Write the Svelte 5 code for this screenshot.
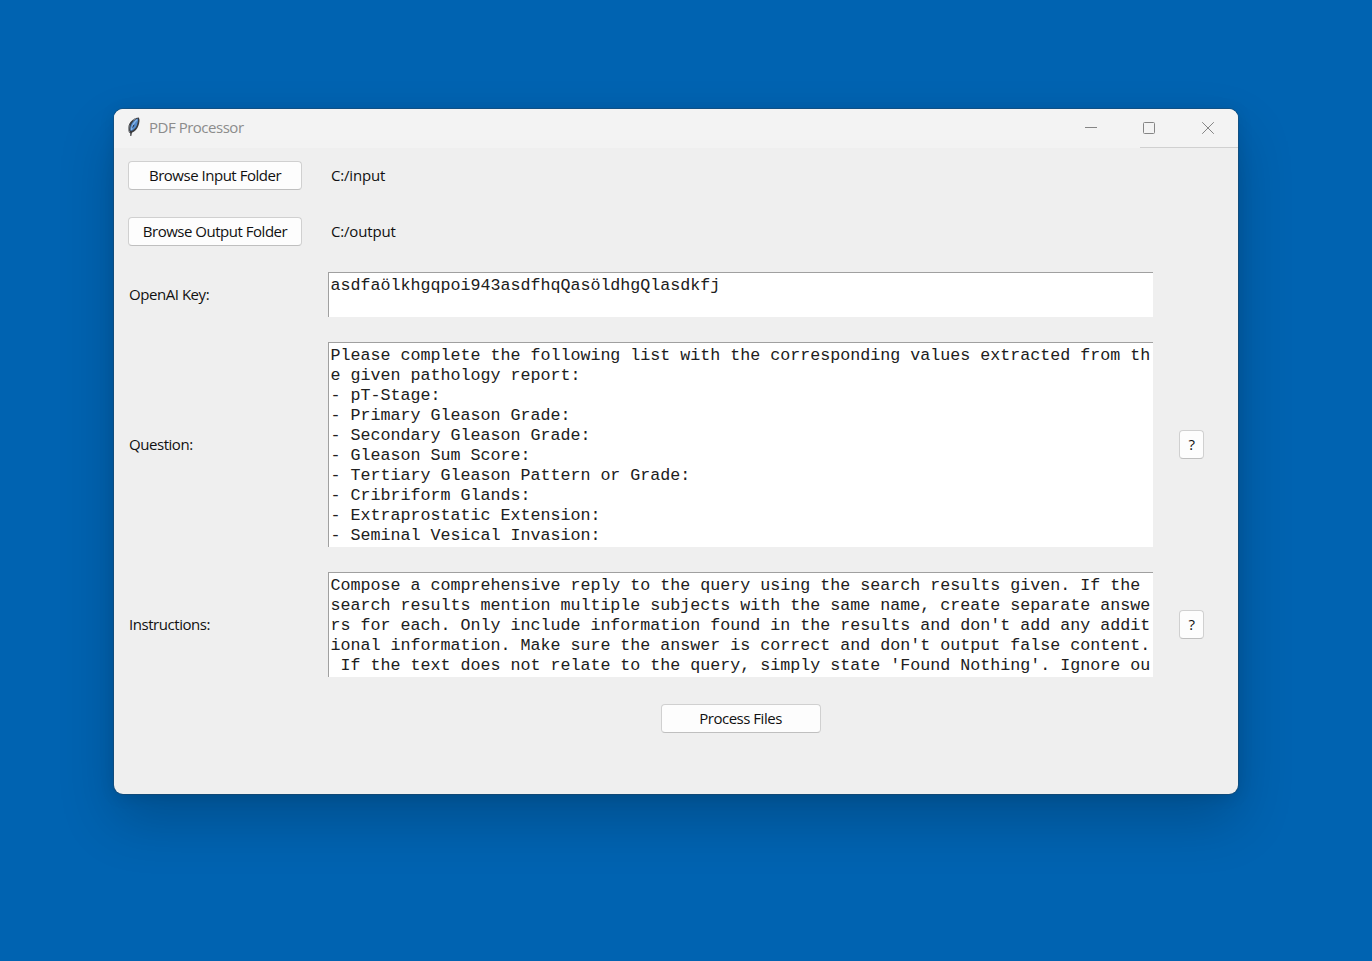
<script>
  const key = 'asdfaölkhgqpoi943asdfhqQasöldhgQlasdkfj';
  const question = [
    'Please complete the following list with the corresponding values extracted from th',
    'e given pathology report:',
    '- pT-Stage:',
    '- Primary Gleason Grade:',
    '- Secondary Gleason Grade:',
    '- Gleason Sum Score:',
    '- Tertiary Gleason Pattern or Grade:',
    '- Cribriform Glands:',
    '- Extraprostatic Extension:',
    '- Seminal Vesical Invasion:'
  ].join('\n');
  const instructions = [
    'Compose a comprehensive reply to the query using the search results given. If the ',
    'search results mention multiple subjects with the same name, create separate answe',
    "rs for each. Only include information found in the results and don't add any addit",
    "ional information. Make sure the answer is correct and don't output false content.",
    " If the text does not relate to the query, simply state 'Found Nothing'. Ignore ou"
  ].join('\n');
</script>

<main class="desktop">
  <section class="window">
    <header class="titlebar">
      <svg class="feather" width="14" height="20" viewBox="0 0 14 20">
        <path d="M11.800.4C8.200.5 4.400 3 2.500 6.500 1 9.300 1 12.500 1.900 15.200l1.300 1 .1 2.900h1l.6-3.400c3.200-1.200 5.400-3.800 6.500-6.900 1-2.700 1.700-6.600.4-8.400z" fill="#3a3c40" />
        <path d="M10.900 1.600C7.900 2.300 5.200 5.100 3.900 8.300c-.9 2.200-.8 4.400-.2 5.800 3-1 5.200-3.300 6.200-5.900.8-2.200 1.500-5 1-6.600z" fill="#5089cc" />
        <path d="M9.900 2.800C7.200 5.200 5.200 8.800 4.400 13" fill="none" stroke="#8ab6e6" stroke-width="1.300" />
        <path d="M2.100 8.200l-.5 5 1 2M9.200 1.300L6 3.200" fill="none" stroke="#9a9da0" stroke-width=".9" />
        <path d="M5.600 10.500l1.500-2.700" fill="none" stroke="#232b38" stroke-width="1" />
      </svg>
      <span class="title">PDF Processor</span>
      <div class="controls">
        <svg width="14" height="14" viewBox="0 0 14 14"><path d="M1 6.500h12" /></svg>
        <svg width="14" height="14" viewBox="0 0 14 14"><rect x="1.500" y="1.500" width="11" height="11" rx="1" /></svg>
        <svg width="14" height="14" viewBox="0 0 14 14"><path d="M1.200 1.200l11.600 11.600M12.800 1.200L1.200 12.800" /></svg>
      </div>
    </header>
    <div class="form">
      <div class="row input">
        <button>Browse Input Folder</button>
        <span class="path">C:/input</span>
      </div>
      <div class="row output">
        <button>Browse Output Folder</button>
        <span class="path">C:/output</span>
      </div>
      <div class="row key">
        <span class="label">OpenAI Key:</span>
        <div class="text">{key}</div>
      </div>
      <div class="row question">
        <span class="label">Question:</span>
        <div class="text">{question}</div>
        <button class="help">?</button>
      </div>
      <div class="row instructions">
        <span class="label">Instructions:</span>
        <div class="text">{instructions}</div>
        <button class="help">?</button>
      </div>
      <div class="row actions">
        <button class="process">Process Files</button>
      </div>
    </div>
  </section>
</main>

<style>
  :global(body) { margin: 0; background: #0063b1; }
  * { box-sizing: border-box; }
  .desktop {
    height: 961px;
    padding: 109px 134px 0 114px;
    background: #0063b1;
    overflow: hidden;
    font: 15px/20px "Open Sans", "Noto Sans", sans-serif;
    letter-spacing: -0.48px;
    color: #111;
  }
  .window {
    width: 1124px;
    height: 685px;
    border-radius: 9px;
    background: #efefef;
    overflow: hidden;
    box-shadow: 0 0 0 1px rgba(40, 65, 85, .4), 0 2px 16px rgba(0, 0, 0, .1), 0 26px 56px rgba(0, 0, 0, .2);
  }
  .titlebar {
    height: 39px;
    display: flex;
    align-items: center;
    padding: 0 23px 2px 13px;
    background: linear-gradient(#d0d0d0, #d0d0d0) right bottom / 98px 1px no-repeat, #f3f3f3;
  }
  .feather { margin: -1px 8px 0 0; }
  .title { color: #8c8c8c; padding-bottom: 2px; }
  .controls { margin-left: auto; display: flex; gap: 45px; }
  .controls svg { fill: none; stroke: #858585; stroke-width: 1; }
  .controls svg:first-child { margin-right: -1px; }
  .form { padding: 13px 14px 0; }
  .row {
    display: grid;
    grid-template-columns: 174px 825px 25px;
    column-gap: 26px;
    align-items: center;
  }
  .input, .output, .actions { height: 29px; }
  .output { margin-top: 27px; }
  .key { margin-top: 26px; height: 45px; }
  .question { margin-top: 25px; height: 205px; }
  .instructions { margin-top: 25px; height: 105px; }
  .actions { margin-top: 27px; }
  button {
    height: 29px;
    padding: 0 0 1px;
    border: 1px solid #d0d0d0;
    border-bottom-color: #bfbfbf;
    border-radius: 4px;
    background: #fdfdfd;
    font: inherit;
    letter-spacing: inherit;
    color: inherit;
  }
  .path { padding: 0 0 1px 3px; letter-spacing: -0.18px; }
  .label { padding: 0 0 1px 1px; letter-spacing: -0.45px; }
  .text {
    height: 100%;
    overflow: hidden;
    padding: 3px 0 0 1.500px;
    border: 0 solid #a0a0a0;
    border-width: 1px 0 0 1px;
    background: #fff;
    white-space: pre;
    font: 16.660px/20px "Courier New", "Liberation Mono", monospace;
    letter-spacing: 0;
    color: #202020;
  }
  .process { grid-column: 2; justify-self: center; width: 160px; }
</style>
